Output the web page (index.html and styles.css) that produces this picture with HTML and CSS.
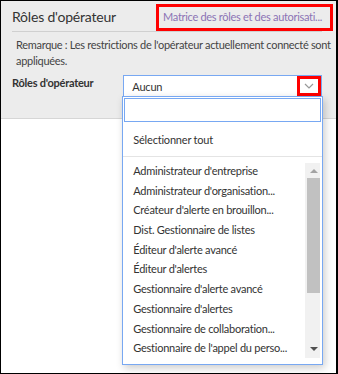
FILE: index.html
```html
<!DOCTYPE html>
<html lang="fr">
<head>
    <meta charset="UTF-8">
    <title>Rôles d'opérateur</title>
    <link rel="stylesheet" href="styles.css">
</head>
<body>
    <div class="frame">
        <div class="panel">
            <div class="head">
                <h2>Rôles d'opérateur</h2>
                <a class="matrix-link" href="#">Matrice des rôles et des autorisati...</a>
            </div>
            <p class="note">Remarque : Les restrictions de l'opérateur actuellement connecté sont appliquées.</p>
            <div class="field">
                <label>Rôles d'opérateur</label>
                <div class="select">
                    <div class="select-box">
                        <span>Aucun</span>
                        <span class="chevron">
                            <svg width="10" height="6" viewBox="0 0 10 6"><path d="M1 1 L5 5 L9 1" fill="none" stroke="#999" stroke-width="1.2"/></svg>
                        </span>
                    </div>
                    <div class="dropdown">
                        <div class="search"><input type="text"></div>
                        <div class="select-all">Sélectionner tout</div>
                        <div class="list-wrap">
                            <ul class="options">
                                <li>Administrateur d'entreprise</li>
                                <li>Administrateur d'organisation...</li>
                                <li>Créateur d'alerte en brouillon...</li>
                                <li>Dist. Gestionnaire de listes</li>
                                <li>Éditeur d'alerte avancé</li>
                                <li>Éditeur d'alertes</li>
                                <li>Gestionnaire d'alerte avancé</li>
                                <li>Gestionnaire d'alertes</li>
                                <li>Gestionnaire de collaboration...</li>
                                <li>Gestionnaire de l'appel du perso...</li>
                            </ul>
                            <div class="scrollbar">
                                <span class="arrow up"></span>
                                <span class="thumb"></span>
                                <span class="arrow down"></span>
                            </div>
                        </div>
                    </div>
                </div>
            </div>
        </div>
    </div>
</body>
</html>
```

FILE: styles.css
```css
body {
    margin: 0;
    font-family: Lato, "Open Sans", sans-serif;
    color: #333;
}

.frame {
    width: 338px;
    height: 374px;
    box-sizing: border-box;
    border: 1px solid #000;
    border-right-width: 2px;
    background: #fff;
    overflow: hidden;
}

.panel {
    background: #ececec;
    border-bottom: 1px solid #d6d6d6;
    height: 117px;
    padding: 0 14px 0 11px;
}

.head {
    display: flex;
    justify-content: space-between;
    align-items: center;
    height: 30px;
    border-bottom: 1px solid #d0d0d0;
}

h2 {
    margin: 0;
    font-size: 14px;
    letter-spacing: -0.2px;
    font-weight: normal;
    color: #333;
}

.matrix-link {
    font-size: 11px;
    letter-spacing: -0.3px;
    color: #8b73b5;
    text-decoration: none;
    border: 3px solid #f00;
    padding: 3px 8px 5px 4px;
    margin-right: -11px;
    margin-top: 2px;
    white-space: nowrap;
}

.note {
    margin: 5px -12px 0 4px;
    font-size: 11px;
    letter-spacing: -0.3px;
    line-height: 16px;
    color: #444;
}

.field {
    display: flex;
    margin-top: 6px;
}

.field label {
    width: 112px;
    font-size: 11px;
    letter-spacing: -0.25px;
    font-weight: bold;
    color: #333;
    padding-top: 1px;
}

.select {
    position: relative;
    width: 200px;
}

.select-box {
    height: 20px;
    border: 1px solid #78a8f2;
    background: #fff;
    display: flex;
    justify-content: space-between;
    align-items: center;
    padding-left: 8px;
    font-size: 11px;
    letter-spacing: -0.2px;
}

.chevron {
    width: 18px;
    height: 14px;
    border: 3px solid #f00;
    display: flex;
    align-items: center;
    justify-content: center;
}

.dropdown {
    position: absolute;
    top: 21px;
    left: -1px;
    width: 199px;
    border: 1px solid #78a8f2;
    background: #fff;
    box-shadow: 2px 3px 8px rgba(0, 0, 0, 0.2);
}

.search {
    padding: 1px 1px 0 1px;
}

.search input {
    display: block;
    width: 100%;
    height: 24px;
    box-sizing: border-box;
    border: 1px solid #78a8f2;
    outline: none;
}

.select-all {
    font-size: 11px;
    letter-spacing: -0.2px;
    line-height: 16px;
    padding: 10px 0 8px 10px;
    border-bottom: 1px solid #e4e4e4;
}

.list-wrap {
    display: flex;
    justify-content: space-between;
    padding: 6px 2px 4px 0;
}

.options {
    list-style: none;
    margin: 0;
    padding: 0 0 0 10px;
    font-size: 11px;
    letter-spacing: -0.25px;
    white-space: nowrap;
}

.options li {
    height: 19.7px;
    line-height: 16px;
}

.scrollbar {
    width: 15px;
    background: #f1f1f1;
    display: flex;
    flex-direction: column;
    align-items: center;
    height: 195px;
}

.thumb {
    width: 13px;
    margin-left: 2px;
    height: 115px;
    background: #c1c1c1;
}

.arrow {
    width: 0;
    height: 0;
    border-left: 4px solid transparent;
    border-right: 4px solid transparent;
    margin: 6px 0 5px 2px;
}

.arrow.up {
    border-bottom: 4px solid #a3a3a3;
}

.arrow.down {
    border-top: 4px solid #505050;
    margin-top: auto;
    margin-bottom: 7px;
}
```
